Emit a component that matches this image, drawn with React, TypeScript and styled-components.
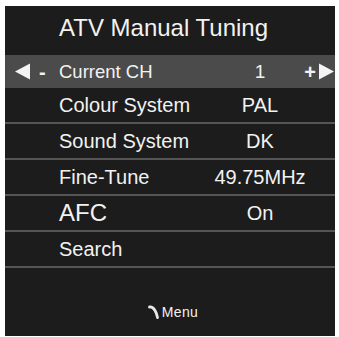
import { FC } from "react";
import styled, { createGlobalStyle } from "styled-components";

const GlobalStyle = createGlobalStyle`
  html, body {
    margin: 0;
    padding: 0;
    background: #ffffff;
  }
  body {
    font-family: "Liberation Sans", Arial, sans-serif;
  }
`;

const Frame = styled.div`
  width: 339px;
  height: 337px;
  padding: 6px 4px 1px 5px;
  box-sizing: border-box;
`;

const Panel = styled.section`
  width: 330px;
  height: 330px;
  background: #1c1c1c;
  color: #f2f2f2;
  display: flex;
  flex-direction: column;
`;

const Title = styled.h1`
  margin: 0;
  height: 49px;
  padding: 0 0 6px 54px;
  box-sizing: border-box;
  display: flex;
  align-items: center;
  font-size: 24px;
  font-weight: 400;
`;

const Row = styled.div<{ $active?: boolean }>`
  display: grid;
  grid-template-columns: ${(p) => (p.$active ? "54px 1fr 80px 35px" : "54px 1fr 120px 15px")};
  align-items: center;
  height: ${(p) => (p.$active ? "33px" : "34px")};
  background: ${(p) => (p.$active ? "#4b4b4b" : "transparent")};
  border-bottom: ${(p) => (p.$active ? "none" : "2px solid #555555")};
`;

const Label = styled.span<{ $size?: number }>`
  grid-column: 2;
  font-size: ${(p) => p.$size ?? 20}px;
  white-space: nowrap;
`;

const Value = styled.span<{ $size?: number }>`
  grid-column: 3;
  justify-self: center;
  font-size: ${(p) => p.$size ?? 20}px;
  white-space: nowrap;
`;

const Lead = styled.div`
  grid-column: 1;
  display: flex;
  align-items: center;
  gap: 8px;
  padding-left: 10px;
`;

const Trail = styled.div`
  grid-column: 4;
  display: flex;
  align-items: center;
  justify-content: flex-end;
  gap: 2px;
  padding-right: 1px;
`;

const Sign = styled.span`
  font-size: 20px;
  font-weight: 700;
  line-height: 1;
`;

const Footer = styled.footer`
  flex: 1;
  display: flex;
  justify-content: center;
  align-items: center;
  padding: 20px 0 0 6px;
  gap: 3px;
  font-size: 14px;
  letter-spacing: 0.4px;
`;

const Triangle: FC<{ dir: "left" | "right" }> = ({ dir }) => (
  <svg width="16" height="17" viewBox="0 0 16 17">
    {dir === "left" ? (
      <polygon points="0,8.5 15,0.5 15,16.5" fill="#f4f4f4" />
    ) : (
      <polygon points="16,8.5 1,0.5 1,16.5" fill="#f4f4f4" />
    )}
  </svg>
);

const MenuIcon: FC = () => (
  <svg width="11" height="14" viewBox="0 0 11 14">
    <path d="M1.5 2 Q4.5 1.5 7 5.5 Q8.8 8.5 9.5 12.5" stroke="#e8e8e8" strokeWidth="2.8" fill="none" strokeLinecap="round" />
  </svg>
);

const rows = [
  { label: "Colour System", value: "PAL" },
  { label: "Sound System", value: "DK" },
  { label: "Fine-Tune", value: "49.75MHz" },
  { label: "AFC", value: "On", size: 24 },
  { label: "Search", value: "" },
];

const App: FC = () => (
  <>
    <GlobalStyle />
    <Frame>
      <Panel>
        <Title>ATV Manual Tuning</Title>
        <Row $active>
          <Lead>
            <Triangle dir="left" />
            <Sign>-</Sign>
          </Lead>
          <Label $size={18.5}>Current CH</Label>
          <Value $size={19}>1</Value>
          <Trail>
            <Sign>+</Sign>
            <Triangle dir="right" />
          </Trail>
        </Row>
        {rows.map((r) => (
          <Row key={r.label}>
            <Label $size={r.size}>{r.label}</Label>
            <Value>{r.value}</Value>
          </Row>
        ))}
        <Footer>
          <MenuIcon />
          Menu
        </Footer>
      </Panel>
    </Frame>
  </>
);

export default App;
